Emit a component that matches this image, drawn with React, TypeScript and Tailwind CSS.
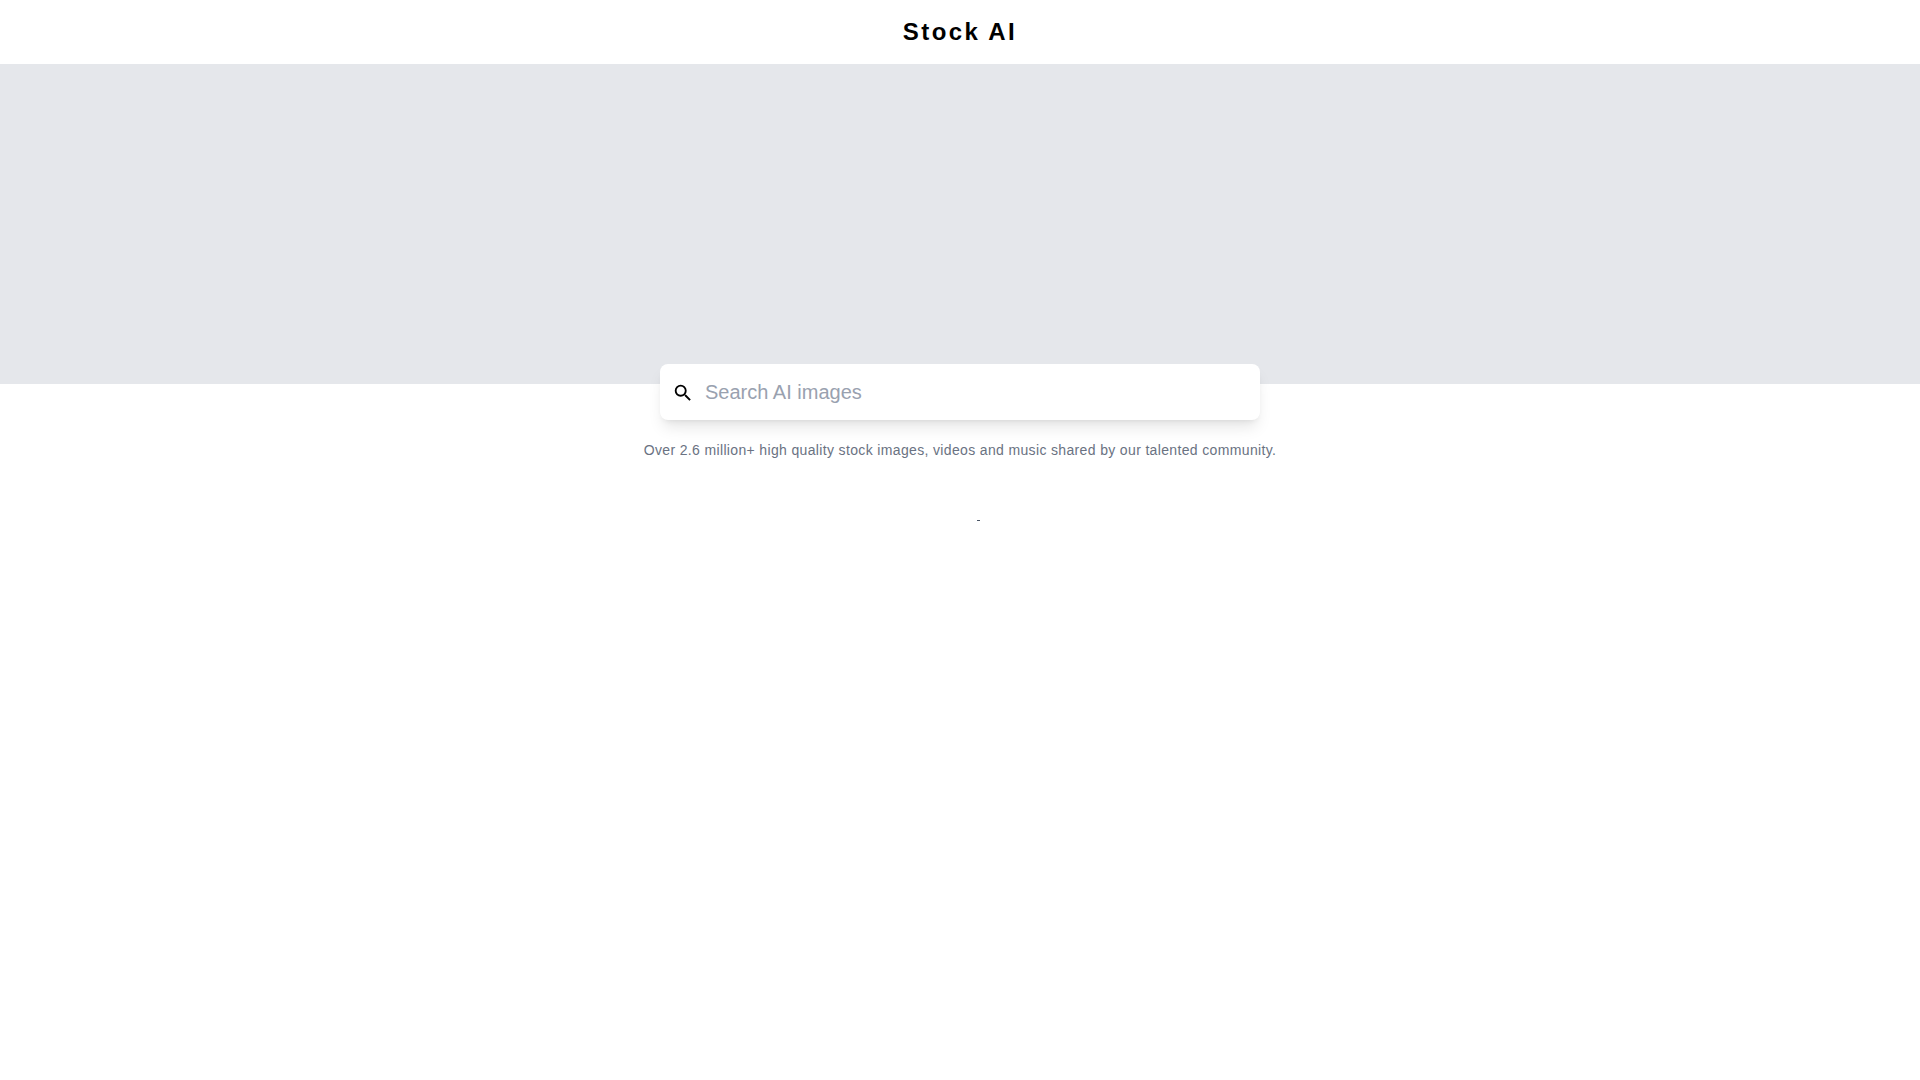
import React from "react";

const SearchIcon = () => (
  <svg viewBox="0 0 24 24" className="w-[22px] h-[22px] mt-px shrink-0 text-black" fill="currentColor">
    <path d="M15.5 14h-.79l-.28-.27A6.471 6.471 0 0 0 16 9.5 6.5 6.5 0 1 0 9.5 16c1.61 0 3.09-.59 4.23-1.57l.27.28v.79l5 4.99L20.49 19l-4.99-5zm-6 0C7.01 14 5 11.99 5 9.5S7.01 5 9.5 5 14 7.01 14 9.5 11.99 14 9.5 14z" />
  </svg>
);

const App = () => {
  return (
    <div className="min-h-screen bg-white font-['Liberation_Sans',Arial,sans-serif]">
      <header className="h-16 flex items-center justify-center">
        <h1 className="text-2xl font-bold tracking-widest text-black">Stock AI</h1>
      </header>

      <div className="h-80 bg-gray-200" />

      <div className="flex flex-col items-center">
        <div className="-mt-5 w-[600px] h-14 flex items-center gap-[11px] px-3 bg-white rounded-lg shadow-lg">
          <SearchIcon />
          <input
            className="flex-1 outline-none text-xl text-gray-700 placeholder:text-gray-400 bg-transparent"
            placeholder="Search AI images"
          />
        </div>
        <p className="mt-5 text-sm leading-5 tracking-wide text-gray-500">
          Over 2.6 million+ high quality stock images, videos and music shared by our talented community.
        </p>
        <div className="mt-[60px] ml-9 w-[3px] h-px bg-gray-600" />
      </div>
    </div>
  );
};

export default App;
